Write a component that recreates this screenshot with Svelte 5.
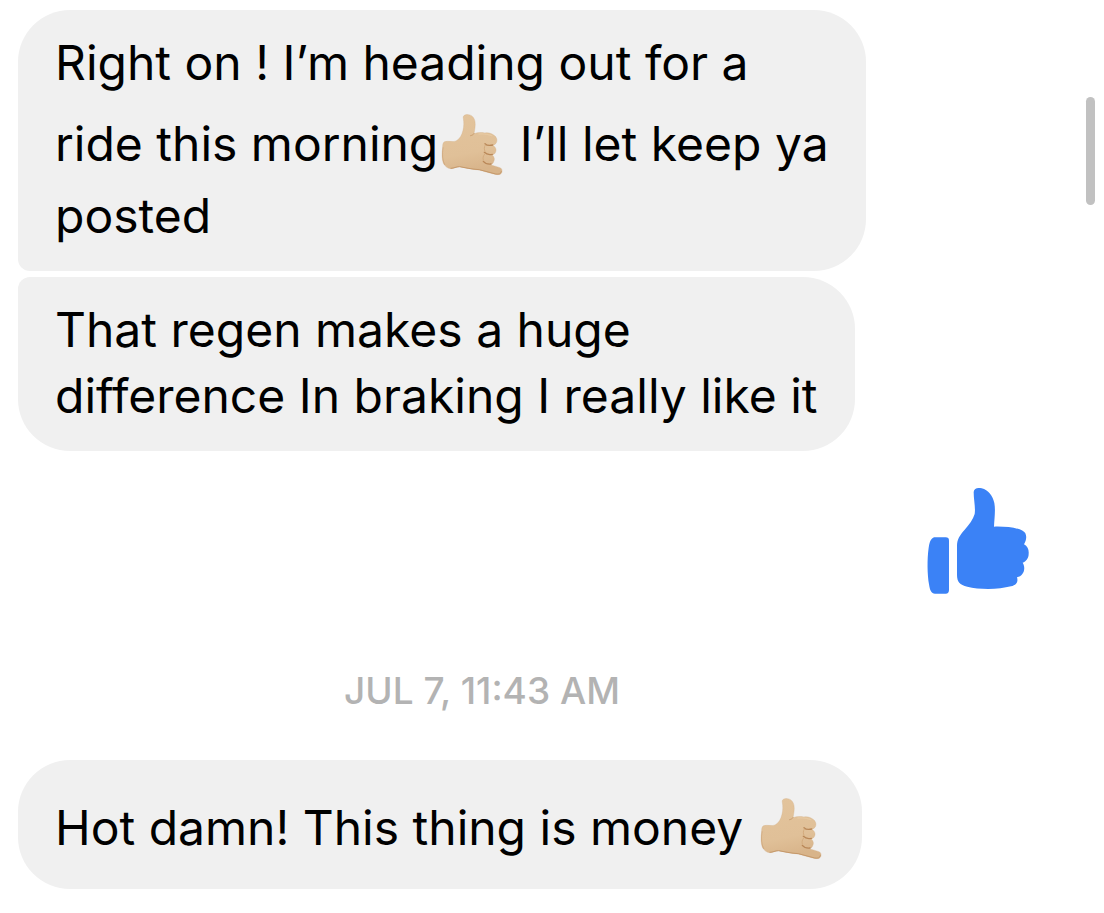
<script lang="ts">
  type Message =
    | { kind: 'text'; group: 'single' | 'first' | 'last'; lines: string[] }
    | { kind: 'like' }
    | { kind: 'time'; label: string };

  const SHAKA = '🤙🏼';

  const messages: Message[] = [
    {
      kind: 'text',
      group: 'first',
      lines: [
        'Right on ! I’m heading out for a',
        `ride this morning${SHAKA} I’ll let keep ya`,
        'posted',
      ],
    },
    {
      kind: 'text',
      group: 'last',
      lines: ['That regen makes a huge', 'difference In braking I really like it'],
    },
    { kind: 'like' },
    { kind: 'time', label: 'Jul 7, 11:43 AM' },
    { kind: 'text', group: 'single', lines: [`Hot damn! This thing is money ${SHAKA}`] },
  ];
</script>

{#snippet shaka()}
  <svg class="emoji" viewBox="36 -15 186 261" role="img" aria-label="Call me hand">
    <defs>
      <linearGradient id="skin" x1="0" y1="0" x2="0.2" y2="1">
        <stop offset="0" stop-color="#e3c49c" />
        <stop offset="0.7" stop-color="#e0c098" />
        <stop offset="1" stop-color="#d8b48a" />
      </linearGradient>
    </defs>
    <path
      fill="url(#skin)"
      stroke="#d2ad82"
      stroke-width="1"
      d="M103 52C101 44 108 40 118 41C129 42 136 50 138 62C140 74 137 86 135 98C145 94 157 94 168 96
        C178 93 192 99 199 106C204 112 206 121 200 128C197 131 194 132 191 133C200 138 203 145 200 153
        C198 158 194 161 190 162C196 168 198 175 194 182C193 186 189 190 184 191L213 200
        C220 203 221 212 216 218C212 222 203 221 194 219L151 207C131 206 108 200 91 197
        C81 198 75 202 66 203C56 203 48 196 43 187C38 173 39 155 41 141C41 133 41 124 47 122
        C58 119 71 124 81 120C93 114 99 101 102 88C105 76 105 65 103 52Z"
    />
    <g fill="none" stroke-linecap="round">
      <path stroke="#c79b6c" stroke-width="3" d="M135 98C133 101 129 103 125 104" />
      <path
        stroke="#b98757"
        stroke-width="4"
        d="M168 128C174 134 183 134 191 132M166 154C172 160 181 162 190 160M163 181C168 187 177 190 186 189"
      />
      <path
        stroke="#d3ab7d"
        stroke-width="3"
        d="M169 132C165 137 165 146 168 151M167 159C162 165 161 172 163 177"
      />
      <path
        stroke="#c5986a"
        stroke-width="3"
        d="M66 202C76 202 80 197 92 197C108 200 130 205 151 206L200 219C210 221 216 218 217 212"
      />
      <path stroke="#c5986a" stroke-width="3" d="M42 140C39 159 40 178 47 191" opacity="0.5" />
      <path stroke="#ebcfa8" stroke-width="4" d="M150 99C160 98 176 98 188 104" opacity="0.6" />
    </g>
  </svg>
{/snippet}

<main class="thread">
  {#each messages as message}
    {#if message.kind === 'text'}
      <div class="bubble {message.group}">
        {#each message.lines as line}
          <span class="line">
            {#each line.split(SHAKA) as part, i}{#if i > 0}{@render shaka()}{/if}{part}{/each}
          </span>
        {/each}
      </div>
    {:else if message.kind === 'like'}
      <svg class="like" viewBox="33 36 312 324" role="img" aria-label="Thumbs up">
        <path
          d="M61 187H92Q102 187 102 197V345Q102 356 92 356H60C49 356 45 347 42 328C37 298 36 253 41 218
            C45 194 51 187 61 187Z"
        />
        <path
          d="M176 51C177 39 188 37 200 40C220 45 233 62 238 84C242 106 238 131 237 155
            C272 154 306 158 323 167C337 174 336 193 327 208C338 213 342 225 341 236
            C341 250 333 259 323 263C330 274 329 288 322 297C318 303 313 305 306 307
            C310 320 305 330 288 334C251 344 192 344 157 335C134 329 126 321 126 299V213
            C126 193 134 181 149 164C163 148 174 134 179 117C182 98 176 75 176 51Z"
        />
      </svg>
    {:else}
      <time class="stamp">{message.label}</time>
    {/if}
  {/each}
</main>
<div class="scroll-thumb" aria-hidden="true"></div>

<style>
  :global(body) {
    background: #fff;
  }

  .thread {
    display: flex;
    flex-direction: column;
    align-items: flex-start;
    padding: 10px 74px 24px 18px;
    font-family: Inter, 'Liberation Sans', sans-serif;
    color: #000;
  }

  .bubble {
    padding: 20px 37px 22px;
    border-radius: 52px;
    background: #f0f0f0;
    font-size: 48px;
    line-height: 66px;
  }

  .bubble.first {
    margin-bottom: 6px;
    border-bottom-left-radius: 12px;
  }

  .bubble.last {
    border-top-left-radius: 12px;
  }

  .line {
    display: block;
    white-space: nowrap;
  }

  .emoji {
    width: 62px;
    height: 87px;
    margin: 0 3px;
    vertical-align: -22px;
  }

  .like {
    align-self: flex-end;
    width: 104px;
    height: 108px;
    margin-top: 36px;
    fill: #3b82f6;
  }

  .stamp {
    align-self: stretch;
    margin: 72px 64px 45px 0;
    padding-right: 20px;
    font-size: 37px;
    font-weight: 500;
    line-height: 48px;
    text-align: center;
    text-transform: uppercase;
    color: #b3b3b3;
  }

  .scroll-thumb {
    position: absolute;
    top: 97px;
    right: 9px;
    width: 9px;
    height: 108px;
    border-radius: 5px;
    background: #c1c1c1;
  }
</style>
